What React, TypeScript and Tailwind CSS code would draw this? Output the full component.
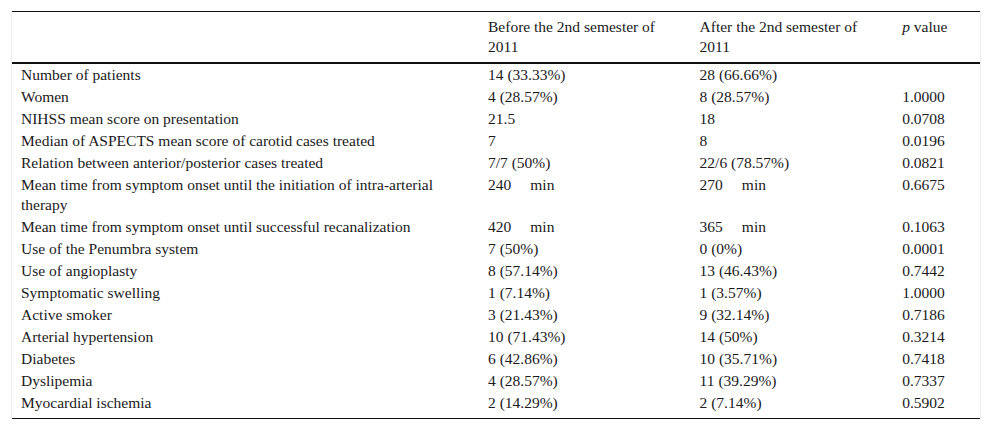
import React from "react";

type Row = { label: string[]; a: React.ReactNode; b: React.ReactNode; p: string };

const Min = ({ n }: { n: string }) => (
  <span>
    {n}
    <span className="ml-[19px]">min</span>
  </span>
);

const rows: Row[] = [
  { label: ["Number of patients"], a: "14 (33.33%)", b: "28 (66.66%)", p: "" },
  { label: ["Women"], a: "4 (28.57%)", b: "8 (28.57%)", p: "1.0000" },
  { label: ["NIHSS mean score on presentation"], a: "21.5", b: "18", p: "0.0708" },
  { label: ["Median of ASPECTS mean score of carotid cases treated"], a: "7", b: "8", p: "0.0196" },
  { label: ["Relation between anterior/posterior cases treated"], a: "7/7 (50%)", b: "22/6 (78.57%)", p: "0.0821" },
  {
    label: ["Mean time from symptom onset until the initiation of intra-arterial", "therapy"],
    a: <Min n="240" />,
    b: <Min n="270" />,
    p: "0.6675",
  },
  { label: ["Mean time from symptom onset until successful recanalization"], a: <Min n="420" />, b: <Min n="365" />, p: "0.1063" },
  { label: ["Use of the Penumbra system"], a: "7 (50%)", b: "0 (0%)", p: "0.0001" },
  { label: ["Use of angioplasty"], a: "8 (57.14%)", b: "13 (46.43%)", p: "0.7442" },
  { label: ["Symptomatic swelling"], a: "1 (7.14%)", b: "1 (3.57%)", p: "1.0000" },
  { label: ["Active smoker"], a: "3 (21.43%)", b: "9 (32.14%)", p: "0.7186" },
  { label: ["Arterial hypertension"], a: "10 (71.43%)", b: "14 (50%)", p: "0.3214" },
  { label: ["Diabetes"], a: "6 (42.86%)", b: "10 (35.71%)", p: "0.7418" },
  { label: ["Dyslipemia"], a: "4 (28.57%)", b: "11 (39.29%)", p: "0.7337" },
  { label: ["Myocardial ischemia"], a: "2 (14.29%)", b: "2 (7.14%)", p: "0.5902" },
];

export default function App() {
  return (
    <div
      className="w-[992px] h-[431px] bg-white text-[#1a1a1a] text-[15.5px] leading-[20px] pt-[11px] pl-[11px]"
      style={{ fontFamily: '"Liberation Serif", "Times New Roman", serif' }}
    >
      <div className="w-[970px] border-x border-[#ececec]">
        <div className="border-t border-[#111] flex pt-[5px] pb-[5px]">
          <div className="w-[468px] pl-[9px]">&nbsp;</div>
          <div className="w-[212px] pl-[9px]">
            Before the 2nd semester of
            <br />
            2011
          </div>
          <div className="w-[203px] pl-[9px]">
            After the 2nd semester of
            <br />
            2011
          </div>
          <div className="w-[87px] pl-[9px]">
            <i>p</i> value
          </div>
        </div>
        <div className="border-t-2 border-[#111] pb-[4px]">
          {rows.map((r, i) => (
            <div key={i} className="flex py-[1px]">
              <div className="w-[468px] pl-[9px]">
                {r.label.map((l, j) => (
                  <div key={j}>{l}</div>
                ))}
              </div>
              <div className="w-[212px] pl-[9px]">{r.a}</div>
              <div className="w-[203px] pl-[9px]">{r.b}</div>
              <div className="w-[87px] pl-[9px]">{r.p}</div>
            </div>
          ))}
        </div>
        <div className="border-t border-[#111]" />
      </div>
    </div>
  );
}
